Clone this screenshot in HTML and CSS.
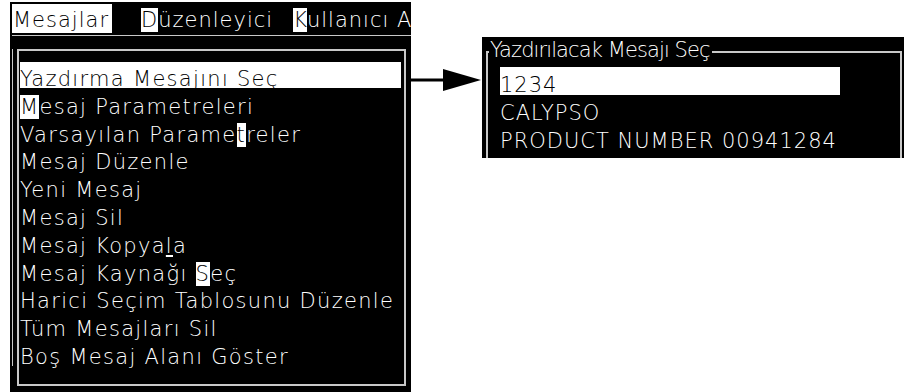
FILE: index.html
```html
<!DOCTYPE html>
<html lang="tr">
<head>
  <meta charset="UTF-8">
  <meta name="viewport" content="width=device-width, initial-scale=1.0">
  <title>Mesajlar</title>
  <link rel="stylesheet" href="styles.css">
</head>
<body>

  <!-- Printer screen: Messages menu -->
  <div class="screen">
    <div class="menubar">
      <span class="menu-item active">Mesajlar</span>
      <span class="menu-item editor"><span class="key">D</span>üzenleyici</span>
      <span class="menu-item user"><span class="key">K</span>ullanıcı A</span>
    </div>
    <div class="panel">
      <div class="frame">
        <div class="item selected">Yazdırma Mesajını Seç</div>
        <div class="item"><span class="key">M</span>esaj Parametreleri</div>
        <div class="item">Varsayılan Parame<span class="key">t</span>reler</div>
        <div class="item">Mesaj Düzenle</div>
        <div class="item">Yeni Mesaj</div>
        <div class="item">Mesaj Sil</div>
        <div class="item">Mesaj Kopya<span class="mark">l</span>a</div>
        <div class="item">Mesaj Kaynağı <span class="key">S</span>eç</div>
        <div class="item">Harici Seçim Tablosunu Düzenle</div>
        <div class="item">Tüm Mesajları Sil</div>
        <div class="item">Boş Mesaj Alanı Göster</div>
      </div>
    </div>
  </div>

  <!-- Arrow to the result screen -->
  <svg class="arrow" width="71" height="24" viewBox="0 0 71 24">
    <line x1="0" y1="12" x2="34" y2="12" stroke="#000" stroke-width="3"/>
    <polygon points="32,1 70,12 32,23" fill="#000"/>
  </svg>

  <!-- Select message to print -->
  <div class="dialog">
    <div class="group">
      <div class="title">Yazdırılacak Mesajı Seç</div>
      <div class="msg selected">1234</div>
      <div class="msg">CALYPSO</div>
      <div class="msg">PRODUCT NUMBER 00941284</div>
    </div>
  </div>

</body>
</html>
```

FILE: styles.css
```css
body {
  margin: 0;
  background-color: #fff;
  font-family: "DejaVu Sans", sans-serif;
  font-size: 21px;
  font-weight: 200;
  letter-spacing: 1.3px;
  color: #fff;
  display: flex;
  align-items: flex-start;
}

.screen {
  margin: 2px 0 0 10px;
  width: 401px;
  height: 390px;
  padding-left: 2px;
  box-sizing: border-box;
  background-color: #000;
  overflow: hidden;
}

.menubar {
  display: flex;
  white-space: nowrap;
  padding: 2px 0;
  border-bottom: 1px solid #c8c8c8;
  letter-spacing: 1px;
}

.menu-item {
  padding-top: 4px;
  height: 25px;
  line-height: 25px;
}

.menu-item.active {
  padding: 4px 3px 0 1px;
  background-color: #fff;
  color: #000;
}

.editor {
  margin-left: 29px;
}

.user {
  margin-left: 20px;
}

.key {
  background-color: #fff;
  color: #000;
}

.mark {
  text-decoration: underline;
}

/* Menu list */
.panel {
  height: 317px;
  border-left: 1px solid #c8c8c8;
}

.frame {
  margin: 13px 0 0 4px;
  width: 389px;
  height: 337px;
  box-sizing: border-box;
  border: 2px solid #c8c8c8;
  padding: 11px 3px 0 1px;
}

.item {
  height: 17px;
  padding-top: 9px;
  line-height: 17px;
  margin-bottom: 1.8px;
  white-space: nowrap;
}

.selected {
  background-color: #fff;
  color: #000;
}

.arrow {
  margin-top: 68px;
  flex-shrink: 0;
}

/* Message picker */
.dialog {
  margin-top: 37px;
  width: 422px;
  height: 121px;
  padding: 14px 2px 0 4px;
  box-sizing: border-box;
  background-color: #000;
  overflow: hidden;
  letter-spacing: 1px;
}

.group {
  height: 200px;
  border: 2px solid #c8c8c8;
  border-bottom: none;
}

.title {
  width: fit-content;
  margin: -13px 0 7px 1px;
  padding: 0 2px 0 1px;
  line-height: 20px;
  letter-spacing: -0.9px;
  background-color: #000;
  white-space: nowrap;
}

.msg {
  margin-left: 12px;
  width: 340px;
  height: 19px;
  padding-top: 9px;
  line-height: 19px;
  white-space: nowrap;
}
```
